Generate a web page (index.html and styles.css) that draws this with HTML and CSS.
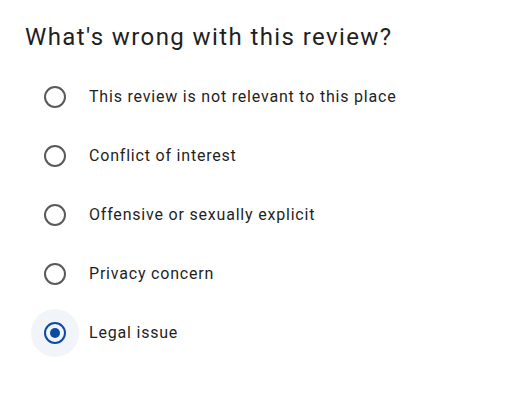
FILE: index.html
```html
<!DOCTYPE html>
<html lang="en">
<head>
  <meta charset="UTF-8" />
  <meta name="viewport" content="width=device-width, initial-scale=1.0" />
  <title>Report review</title>
  <link rel="stylesheet" href="styles.css">
</head>
<body>
  <div class="dialog">
    <h1>What's wrong with this review?</h1>

    <div class="options">
      <label class="option">
        <span class="radio-wrap"><span class="radio"></span></span>
        <span class="label">This review is not relevant to this place</span>
      </label>
      <label class="option">
        <span class="radio-wrap"><span class="radio"></span></span>
        <span class="label">Conflict of interest</span>
      </label>
      <label class="option">
        <span class="radio-wrap"><span class="radio"></span></span>
        <span class="label">Offensive or sexually explicit</span>
      </label>
      <label class="option">
        <span class="radio-wrap"><span class="radio"></span></span>
        <span class="label">Privacy concern</span>
      </label>
      <label class="option selected">
        <span class="radio-wrap"><span class="radio"></span></span>
        <span class="label">Legal issue</span>
      </label>
    </div>
  </div>
</body>
</html>
```

FILE: styles.css
```css
body {
  margin: 0;
  padding: 0;
  background: #ffffff;
  font-family: Roboto, "Noto Sans", Arial, sans-serif;
  color: #1f1f1f;
}
.dialog {
  padding: 22px 0 0 25px;
}
h1 {
  margin: 0;
  height: 45px;
  font-size: 24px;
  font-weight: 400;
  line-height: 30px;
  letter-spacing: 1.4px;
  color: #1f1f1f;
}
.options {
  display: flex;
  flex-direction: column;
  padding-left: 6px;
}
.option {
  display: flex;
  align-items: center;
  height: 59px;
  gap: 10px;
  cursor: pointer;
}
.radio-wrap {
  width: 48px;
  height: 48px;
  border-radius: 50%;
  display: flex;
  justify-content: center;
  align-items: center;
}
.radio {
  width: 18px;
  height: 18px;
  border: 2px solid #5a5a5a;
  border-radius: 50%;
  display: flex;
  justify-content: center;
  align-items: center;
}
.label {
  font-size: 16px;
  letter-spacing: 0.8px;
  color: #1f1f1f;
}
.option.selected .radio-wrap {
  background: #f1f4f9;
}
.option.selected .radio {
  border-color: #0d4aa6;
}
.option.selected .radio::after {
  content: "";
  width: 10px;
  height: 10px;
  border-radius: 50%;
  background: #0d4aa6;
}
```
